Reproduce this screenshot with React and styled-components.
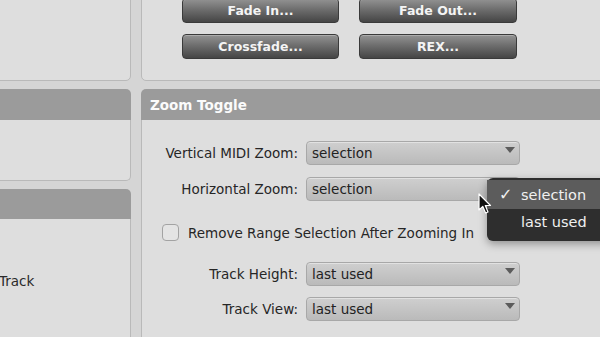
import React from "react"
import styled, { createGlobalStyle } from "styled-components"

const GlobalStyle = createGlobalStyle`
  html, body {
    margin: 0;
    background: #d5d5d5;
    overflow: hidden;
    font-family: "DejaVu Sans", "Liberation Sans", sans-serif;
  }
`

const Page = styled.div`
  display: grid;
  grid-template-columns: 200px 520px;
  column-gap: 10px;
  margin-left: -69px;
  margin-top: -30px;
  height: 380px;
`

const Column = styled.div`
  display: flex;
  flex-direction: column;
  gap: 8px;
`

const Panel = styled.div`
  background: #dedede;
  border: 1px solid #b9b9b9;
  border-radius: 5px;
  box-sizing: border-box;
  height: ${props => props.$height || "auto"};
`

const Section = styled.div`
  display: flex;
  flex-direction: column;
  flex: ${props => (props.$grow ? 1 : "none")};
`

const Header = styled.div`
  height: ${props => props.$height || "31px"};
  background: #9b9b9b;
  border-radius: 5px 5px 0 0;
  color: #fbfbfb;
  font-weight: bold;
  font-size: 13.5px;
  display: flex;
  align-items: center;
  padding-left: 9px;
  box-sizing: border-box;
`

const Body = styled.div`
  position: relative;
  background: #dedede;
  border: 1px solid #b9b9b9;
  border-top: none;
  border-radius: 0 0 5px 5px;
  box-sizing: border-box;
  height: ${props => props.$height || "auto"};
  flex: ${props => (props.$grow ? 1 : "none")};
`

const ButtonGrid = styled.div`
  display: grid;
  grid-template-columns: 157px 158px;
  column-gap: 20px;
  row-gap: 11px;
  padding: 27px 0 20px 40px;
`

const Button = styled.button`
  height: 25px;
  border: 1px solid #3a3a3a;
  border-radius: 4px;
  background: linear-gradient(#939393 0%, #6e6e6e 45%, #454545 100%);
  color: #f4f4f4;
  font-family: "DejaVu Sans", "Liberation Sans", sans-serif;
  font-weight: bold;
  font-size: 12.5px;
  padding: 0;
  box-shadow: inset 0 1px 0 rgba(255, 255, 255, 0.25);
`

const SideText = styled.div`
  font-size: 13.5px;
  color: #2a2a2a;
  padding: 54px 0 0 67px;
`

const FieldRow = styled.div`
  display: grid;
  grid-template-columns: 140px 214px;
  column-gap: 8px;
  align-items: center;
  margin-top: ${props => props.$top};
  padding-left: 16px;
`

const Label = styled.span`
  font-size: 13.5px;
  color: #262626;
  text-align: right;
  white-space: nowrap;
`

const Select = styled.div`
  height: 24px;
  box-sizing: border-box;
  border: 1px solid #a8a8a8;
  border-radius: 4px;
  background: linear-gradient(#cfcfcf, #bababa);
  display: flex;
  align-items: center;
  justify-content: space-between;
  padding: 0 4px 0 5px;
  font-size: 13.5px;
  color: #222;
  box-shadow: inset 0 1px 0 rgba(255, 255, 255, 0.4);
`

const Caret = styled.span`
  width: 0;
  height: 0;
  border-left: 5px solid transparent;
  border-right: 5px solid transparent;
  border-top: 6px solid #5c5c5c;
  margin-top: -7px;
`

const CheckRow = styled.label`
  display: flex;
  align-items: center;
  gap: 9px;
  margin-top: 23px;
  padding-left: 20px;
  font-size: 13.5px;
  color: #262626;
  white-space: nowrap;
`

const Box = styled.span`
  width: 17px;
  height: 17px;
  box-sizing: border-box;
  border: 1px solid #a3a3a3;
  border-radius: 4px;
  background: #e4e4e4;
`

const Menu = styled.div`
  position: absolute;
  left: 345px;
  top: 58px;
  width: 140px;
  padding: 2px 0 6px;
  background: #2e2e2e;
  border-radius: 6px;
  box-shadow: 0 3px 8px rgba(0, 0, 0, 0.35);
`

const MenuItem = styled.div`
  height: ${props => (props.$active ? "29px" : "26px")};
  display: flex;
  align-items: center;
  background: ${props => (props.$active ? "#5c5c5c" : "transparent")};
  color: #f0f0f0;
  font-size: 14.5px;
  padding-left: 12px;
`

const Check = styled.span`
  width: 22px;
  font-size: 16px;
  font-weight: bold;
`

const Cursor = styled.svg`
  position: absolute;
  left: 336px;
  top: 73px;
`

const App = () => (
  <>
    <GlobalStyle />
    <Page>
      <Column>
        <Panel $height="111px" />
        <Section>
          <Header />
          <Body $height="61px" />
        </Section>
        <Section $grow>
          <Header $height="30px" />
          <Body $grow>
            <SideText>Track</SideText>
          </Body>
        </Section>
      </Column>
      <Column>
        <Panel $height="111px">
          <ButtonGrid>
            <Button>Fade In...</Button>
            <Button>Fade Out...</Button>
            <Button>Crossfade...</Button>
            <Button>REX...</Button>
          </ButtonGrid>
        </Panel>
        <Section $grow>
          <Header>Zoom Toggle</Header>
          <Body $grow>
            <FieldRow $top="21px">
              <Label>Vertical MIDI Zoom:</Label>
              <Select>selection<Caret /></Select>
            </FieldRow>
            <FieldRow $top="12px">
              <Label>Horizontal Zoom:</Label>
              <Select>selection<Caret /></Select>
            </FieldRow>
            <CheckRow>
              <Box />
              Remove Range Selection After Zooming In
            </CheckRow>
            <FieldRow $top="21px">
              <Label>Track Height:</Label>
              <Select>last used<Caret /></Select>
            </FieldRow>
            <FieldRow $top="11px">
              <Label>Track View:</Label>
              <Select>last used<Caret /></Select>
            </FieldRow>
            <Menu>
              <MenuItem $active>
                <Check>✓</Check>selection
              </MenuItem>
              <MenuItem>
                <Check />last used
              </MenuItem>
            </Menu>
            <Cursor width="14" height="22" viewBox="0 0 14 22">
              <path
                d="M1 1 L1 17 L4.8 13.4 L7.6 20 L10 19 L7.3 12.5 L12.5 12.5 Z"
                fill="#111"
                stroke="#fff"
                strokeWidth="1.2"
                strokeLinejoin="round"
              />
            </Cursor>
          </Body>
        </Section>
      </Column>
    </Page>
  </>
)

export default App
